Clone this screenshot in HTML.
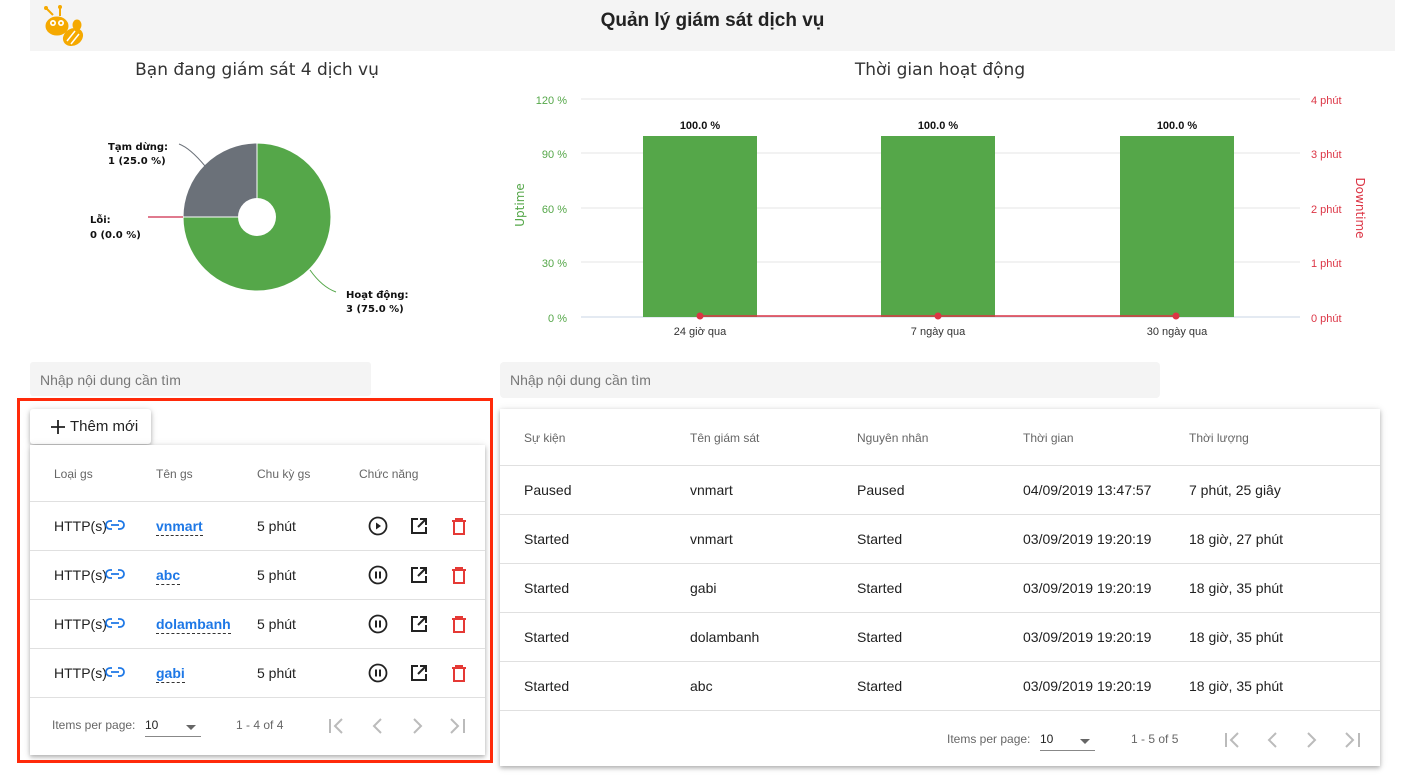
<!DOCTYPE html>
<html><head><meta charset="utf-8">
<style>
*{box-sizing:border-box;margin:0;padding:0}
body{width:1421px;height:781px;background:#fff;font-family:"Liberation Sans",Arial,sans-serif;color:#212121;position:relative;overflow:hidden}
.abs{position:absolute}
.t{position:absolute;white-space:nowrap}
.card{position:absolute;background:#fff;box-shadow:0 2px 4px rgba(0,0,0,.25),0 1px 8px rgba(0,0,0,.12)}
.hline{position:absolute;height:1px;background:#e0e0e0}
.hd{font-size:12px;color:#666}
.cell{font-size:14px;color:#212121}
.lnk{font-size:14px;color:#1e78e6;font-weight:bold;border-bottom:1px dashed #333;padding-bottom:1px}
</style></head><body>
<div class="abs" style="left:30px;top:0;width:1365px;height:51px;background:#f4f4f4"></div>
<svg class="abs" style="left:40px;top:3px" width="50" height="44" viewBox="0 0 50 44">
<g fill="#f5a900" stroke="#f5a900">
<line x1="6" y1="5" x2="13" y2="12" stroke-width="2"/><line x1="20" y1="4" x2="20" y2="13" stroke-width="2"/>
<circle cx="6" cy="5" r="1.5"/><circle cx="20" cy="4" r="1.5"/>
<ellipse cx="17" cy="23" rx="11" ry="9"/>
<ellipse cx="33" cy="34" rx="10" ry="8" transform="rotate(-30 33 34)"/>
<ellipse cx="37" cy="22" rx="4" ry="5"/>
</g>
<circle cx="13" cy="20" r="3" fill="#fff"/><circle cx="21" cy="20" r="3" fill="#fff"/>
<circle cx="13" cy="20" r="1.3" fill="#f5a900"/><circle cx="21" cy="20" r="1.3" fill="#f5a900"/>
<path d="M27 38 L35 28 M31 41 L39 31" stroke="#fff" stroke-width="1.5"/>
</svg>
<div class="t" style="left:0;width:1425px;top:10px;text-align:center;font-size:19px;font-weight:bold;color:#222">Quản lý giám sát dịch vụ</div>

<div class="t" style="left:57px;width:400px;top:60px;text-align:center;font-family:'DejaVu Sans',sans-serif;font-size:17px;color:#333">Bạn đang giám sát 4 dịch vụ</div>
<svg class="abs" style="left:0;top:0" width="500" height="340">
<path d="M257 217 L257 143 A74 74 0 1 1 183 217 Z" fill="#55a749" stroke="#fff" stroke-width="1"/>
<path d="M257 217 L183 217 A74 74 0 0 1 257 143 Z" fill="#6b7179" stroke="#fff" stroke-width="1"/>
<circle cx="257" cy="217" r="19" fill="#fff"/>
<path d="M179 144 Q190 148 205 166" stroke="#6b7179" fill="none"/>
<line x1="148" y1="217" x2="183" y2="217" stroke="#e07a8e" stroke-width="2"/>
<path d="M310 270 Q322 287 336 292" stroke="#55a749" fill="none"/>
<g font-family="DejaVu Sans,sans-serif" font-size="10" font-weight="bold" fill="#111">
<text x="108" y="150">Tạm dừng:</text><text x="108" y="164">1 (25.0 %)</text>
<text x="90" y="223">Lỗi:</text><text x="90" y="238">0 (0.0 %)</text>
<text x="346" y="298">Hoạt động:</text><text x="346" y="312">3 (75.0 %)</text>
</g>
</svg>

<div class="t" style="left:740px;width:400px;top:60px;text-align:center;font-family:'DejaVu Sans',sans-serif;font-size:17px;color:#333">Thời gian hoạt động</div>
<svg class="abs" style="left:500px;top:80px" width="900" height="270" viewBox="500 80 900 270">
<g stroke="#e6e6e6"><line x1="581" y1="99" x2="1300" y2="99"/><line x1="581" y1="153" x2="1300" y2="153"/><line x1="581" y1="208" x2="1300" y2="208"/><line x1="581" y1="262" x2="1300" y2="262"/></g>
<line x1="581" y1="317" x2="1300" y2="317" stroke="#c8d4e6"/>
<g fill="#55a749"><rect x="643" y="136" width="114" height="181"/><rect x="881" y="136" width="114" height="181"/><rect x="1120" y="136" width="114" height="181"/></g>
<line x1="700" y1="316" x2="1176" y2="316" stroke="#dc3545" stroke-width="1.5"/>
<g fill="#dc3545"><circle cx="700" cy="316" r="3.5"/><circle cx="938" cy="316" r="3.5"/><circle cx="1176" cy="316" r="3.5"/></g>
<g font-family="Liberation Sans,sans-serif" font-size="11">
<g fill="#55a749" text-anchor="end"><text x="567" y="104">120 %</text><text x="567" y="158">90 %</text><text x="567" y="213">60 %</text><text x="567" y="267">30 %</text><text x="567" y="322">0 %</text></g>
<g fill="#dc3545"><text x="1311" y="104">4 phút</text><text x="1311" y="158">3 phút</text><text x="1311" y="213">2 phút</text><text x="1311" y="267">1 phút</text><text x="1311" y="322">0 phút</text></g>
<g fill="#111" font-weight="bold" text-anchor="middle"><text x="700" y="129">100.0 %</text><text x="938" y="129">100.0 %</text><text x="1177" y="129">100.0 %</text></g>
<g fill="#333" text-anchor="middle"><text x="700" y="335">24 giờ qua</text><text x="938" y="335">7 ngày qua</text><text x="1177" y="335">30 ngày qua</text></g>
<text transform="translate(524 205) rotate(-90)" fill="#55a749" text-anchor="middle" font-size="12" font-family="DejaVu Sans,sans-serif">Uptime</text>
<text transform="translate(1356 208) rotate(90)" fill="#dc3545" text-anchor="middle" font-size="12" font-family="DejaVu Sans,sans-serif">Downtime</text>
</g>
</svg>

<div class="abs" style="left:30px;top:362px;width:341px;height:34px;background:#f4f4f4;border-radius:3px"></div>
<div class="t" style="left:40px;top:372px;font-size:14px;color:#777">Nhập nội dung cần tìm</div>
<div class="abs" style="left:500px;top:362px;width:660px;height:36px;background:#f4f4f4;border-radius:4px"></div>
<div class="t" style="left:510px;top:372px;font-size:14px;color:#777">Nhập nội dung cần tìm</div>

<div class="card" style="left:30px;top:409px;width:121px;height:35px;border-radius:3px"></div>
<svg class="abs" style="left:50px;top:419px" width="16" height="16"><path d="M8 1V15M1 8H15" stroke="#222" stroke-width="1.8"/></svg>
<div class="t" style="left:70px;top:418px;font-size:15px;color:#222">Thêm mới</div>
<div class="card" style="left:30px;top:445px;width:455px;height:310px"></div>
<div class="t hd" style="left:54px;top:467px">Loại gs</div>
<div class="t hd" style="left:156px;top:467px">Tên gs</div>
<div class="t hd" style="left:257px;top:467px">Chu kỳ gs</div>
<div class="t hd" style="left:359px;top:467px">Chức năng</div>
<div class="hline" style="left:30px;width:455px;top:501px"></div>
<div class="hline" style="left:30px;width:455px;top:550px"></div>
<div class="hline" style="left:30px;width:455px;top:599px"></div>
<div class="hline" style="left:30px;width:455px;top:648px"></div>
<div class="hline" style="left:30px;width:455px;top:697px"></div>

<svg width="0" height="0" style="position:absolute"><defs>
<g id="lnk"><path d="M7 2 H5 a4 4 0 0 0 0 8 H7 M13 2 H15 a4 4 0 0 1 0 8 H13 M6 6 H14" stroke="#1e78e6" stroke-width="1.8" fill="none"/></g>
<g id="open"><path d="M9 3 H3 V17 H17 V11 M11 3 H17 V9 M17 3 L9 11" stroke="#222" stroke-width="2" fill="none"/></g>
<g id="trash"><path d="M3 5 H17 M7 5 V3 H13 V5 M5 6 V18 H15 V6" stroke="#e53935" stroke-width="2" fill="none"/></g>
<g id="pause"><circle cx="10" cy="10" r="8.5" stroke="#222" stroke-width="1.8" fill="none"/><path d="M8 6.5V13.5M12 6.5V13.5" stroke="#222" stroke-width="2"/></g>
</defs></svg>

<div class="t cell" style="left:54px;top:518px">HTTP(s)</div><svg class="abs" style="left:105px;top:519px" width="22" height="13"><use href="#lnk"/></svg>
<div class="t lnk" style="left:156px;top:518px">vnmart</div><div class="t cell" style="left:257px;top:518px">5 phút</div>
<svg class="abs" style="left:368px;top:516px" width="20" height="20"><circle cx="10" cy="10" r="8.5" stroke="#222" stroke-width="1.8" fill="none"/><path d="M8 6.5 L13 10 L8 13.5Z" fill="#222"/></svg>
<svg class="abs" style="left:409px;top:516px" width="20" height="20"><use href="#open"/></svg>
<svg class="abs" style="left:449px;top:516px" width="20" height="20"><use href="#trash"/></svg>

<div class="t cell" style="left:54px;top:567px">HTTP(s)</div><svg class="abs" style="left:105px;top:568px" width="22" height="13"><use href="#lnk"/></svg>
<div class="t lnk" style="left:156px;top:567px">abc</div><div class="t cell" style="left:257px;top:567px">5 phút</div>
<svg class="abs" style="left:368px;top:565px" width="20" height="20"><use href="#pause"/></svg>
<svg class="abs" style="left:409px;top:565px" width="20" height="20"><use href="#open"/></svg>
<svg class="abs" style="left:449px;top:565px" width="20" height="20"><use href="#trash"/></svg>

<div class="t cell" style="left:54px;top:616px">HTTP(s)</div><svg class="abs" style="left:105px;top:617px" width="22" height="13"><use href="#lnk"/></svg>
<div class="t lnk" style="left:156px;top:616px">dolambanh</div><div class="t cell" style="left:257px;top:616px">5 phút</div>
<svg class="abs" style="left:368px;top:614px" width="20" height="20"><use href="#pause"/></svg>
<svg class="abs" style="left:409px;top:614px" width="20" height="20"><use href="#open"/></svg>
<svg class="abs" style="left:449px;top:614px" width="20" height="20"><use href="#trash"/></svg>

<div class="t cell" style="left:54px;top:665px">HTTP(s)</div><svg class="abs" style="left:105px;top:666px" width="22" height="13"><use href="#lnk"/></svg>
<div class="t lnk" style="left:156px;top:665px">gabi</div><div class="t cell" style="left:257px;top:665px">5 phút</div>
<svg class="abs" style="left:368px;top:663px" width="20" height="20"><use href="#pause"/></svg>
<svg class="abs" style="left:409px;top:663px" width="20" height="20"><use href="#open"/></svg>
<svg class="abs" style="left:449px;top:663px" width="20" height="20"><use href="#trash"/></svg>

<div class="t" style="left:52px;top:718px;font-size:12px;color:#666">Items per page:</div>
<div class="t" style="left:145px;top:718px;font-size:12px;color:#222">10</div>
<div class="abs" style="left:145px;top:736px;width:56px;height:1px;background:#888"></div>
<div class="abs" style="left:186px;top:725px;border-left:5px solid transparent;border-right:5px solid transparent;border-top:5px solid #666"></div>
<div class="t" style="left:236px;top:718px;font-size:12px;color:#666">1 - 4 of 4</div>
<svg class="abs" style="left:320px;top:714px" width="150" height="24" fill="none" stroke="#bbb" stroke-width="2">
<path d="M10 5V19M22 5L15 12L22 19"/><path d="M61 5L54 12L61 19"/><path d="M94 5L101 12L94 19"/><path d="M131 5L138 12L131 19M144 5V19"/></svg>

<div class="abs" style="left:17px;top:398px;width:476px;height:365px;border:3px solid #ff2a0a"></div>

<div class="card" style="left:500px;top:409px;width:880px;height:357px"></div>
<div class="t hd" style="left:524px;top:431px">Sự kiện</div>
<div class="t hd" style="left:690px;top:431px">Tên giám sát</div>
<div class="t hd" style="left:857px;top:431px">Nguyên nhân</div>
<div class="t hd" style="left:1023px;top:431px">Thời gian</div>
<div class="t hd" style="left:1189px;top:431px">Thời lượng</div>
<div class="hline" style="left:500px;width:880px;top:465px"></div>
<div class="hline" style="left:500px;width:880px;top:514px"></div>
<div class="hline" style="left:500px;width:880px;top:563px"></div>
<div class="hline" style="left:500px;width:880px;top:612px"></div>
<div class="hline" style="left:500px;width:880px;top:661px"></div>
<div class="hline" style="left:500px;width:880px;top:710px"></div>

<div class="t cell" style="left:524px;top:482px">Paused</div><div class="t cell" style="left:690px;top:482px">vnmart</div><div class="t cell" style="left:857px;top:482px">Paused</div><div class="t cell" style="left:1023px;top:482px">04/09/2019 13:47:57</div><div class="t cell" style="left:1189px;top:482px">7 phút, 25 giây</div>
<div class="t cell" style="left:524px;top:531px">Started</div><div class="t cell" style="left:690px;top:531px">vnmart</div><div class="t cell" style="left:857px;top:531px">Started</div><div class="t cell" style="left:1023px;top:531px">03/09/2019 19:20:19</div><div class="t cell" style="left:1189px;top:531px">18 giờ, 27 phút</div>
<div class="t cell" style="left:524px;top:580px">Started</div><div class="t cell" style="left:690px;top:580px">gabi</div><div class="t cell" style="left:857px;top:580px">Started</div><div class="t cell" style="left:1023px;top:580px">03/09/2019 19:20:19</div><div class="t cell" style="left:1189px;top:580px">18 giờ, 35 phút</div>
<div class="t cell" style="left:524px;top:629px">Started</div><div class="t cell" style="left:690px;top:629px">dolambanh</div><div class="t cell" style="left:857px;top:629px">Started</div><div class="t cell" style="left:1023px;top:629px">03/09/2019 19:20:19</div><div class="t cell" style="left:1189px;top:629px">18 giờ, 35 phút</div>
<div class="t cell" style="left:524px;top:678px">Started</div><div class="t cell" style="left:690px;top:678px">abc</div><div class="t cell" style="left:857px;top:678px">Started</div><div class="t cell" style="left:1023px;top:678px">03/09/2019 19:20:19</div><div class="t cell" style="left:1189px;top:678px">18 giờ, 35 phút</div>

<div class="t" style="left:947px;top:732px;font-size:12px;color:#666">Items per page:</div>
<div class="t" style="left:1040px;top:732px;font-size:12px;color:#222">10</div>
<div class="abs" style="left:1040px;top:750px;width:55px;height:1px;background:#888"></div>
<div class="abs" style="left:1080px;top:739px;border-left:5px solid transparent;border-right:5px solid transparent;border-top:5px solid #666"></div>
<div class="t" style="left:1131px;top:732px;font-size:12px;color:#666">1 - 5 of 5</div>
<svg class="abs" style="left:1215px;top:728px" width="160" height="24" fill="none" stroke="#bbb" stroke-width="2">
<path d="M11 5V19M23 5L16 12L23 19"/><path d="M61 5L54 12L61 19"/><path d="M93 5L100 12L93 19"/><path d="M131 5L138 12L131 19M144 5V19"/></svg>
</body></html>
